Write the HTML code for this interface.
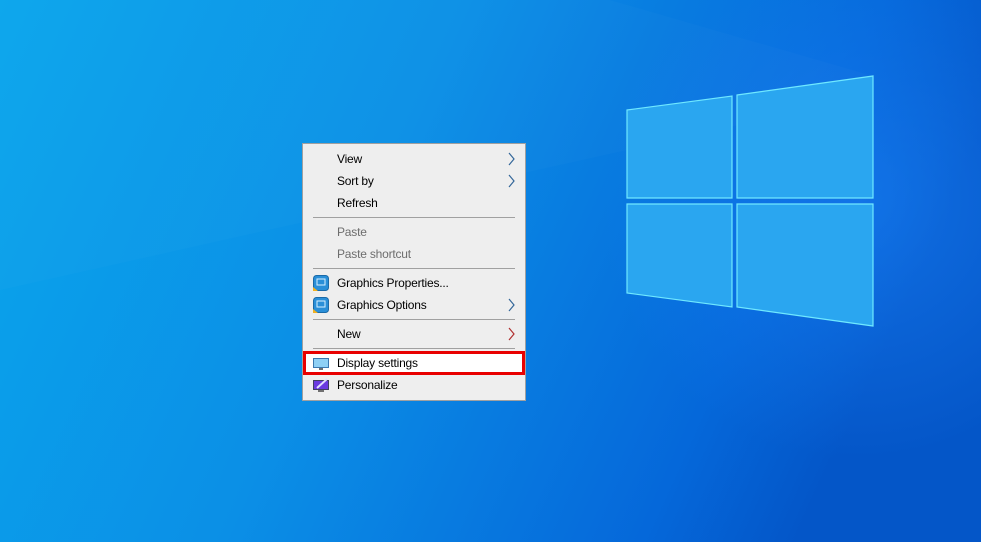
<!DOCTYPE html>
<html><head><meta charset="utf-8"><style>
html,body{margin:0;padding:0;width:981px;height:542px;overflow:hidden}
body{position:relative;font-family:"Liberation Sans",sans-serif}
#bg{position:absolute;left:0;top:0}
.menu{position:absolute;left:302px;top:143px;width:222px;height:256px;background:#eeeeee;border:1px solid #a0a0a0;box-sizing:content-box}
.it{position:absolute;left:34px;font-size:12px;color:#000;line-height:14px;letter-spacing:-0.2px}
.dis{color:#6d6d6d}
.sep{position:absolute;left:10px;width:202px;height:1px;background:#a0a0a0}
.arr{position:absolute;left:204px}
.ic{position:absolute;left:10px}
</style></head><body>
<svg id="bg" width="981" height="542" viewBox="0 0 981 542">
<defs>
<linearGradient id="g" x1="0" y1="0" x2="1" y2="0.25">
<stop offset="0" stop-color="#0aa6ec"/><stop offset="0.45" stop-color="#0b8fe6"/><stop offset="0.85" stop-color="#0568da"/><stop offset="1" stop-color="#0456c8"/>
</linearGradient>
<radialGradient id="r" cx="860" cy="200" r="260" gradientUnits="userSpaceOnUse">
<stop offset="0" stop-color="#1a80f5" stop-opacity="0.6"/><stop offset="1" stop-color="#1a80f5" stop-opacity="0"/>
</radialGradient>
</defs>
<rect width="981" height="542" fill="url(#g)"/>
<rect width="981" height="542" fill="url(#r)"/>
<polygon points="610,0 873,76 873,95 0,290 0,0" fill="#ffffff" opacity="0.02"/>
<g fill="#2aa6f0" stroke="#6fe8ff" stroke-width="1.2">
<polygon points="627,110 732,96 732,198 627,198"/>
<polygon points="737,95 873,76 873,198 737,198"/>
<polygon points="627,204 732,204 732,307 627,293"/>
<polygon points="737,204 873,204 873,326 737,307"/>
</g>
</svg>
<div class="menu">
<div class="it" style="top:8px">View</div>
<svg class="arr" style="top:8px" width="8" height="14"><path d="M2 1 L7 7 L2 13" fill="none" stroke="#336699" stroke-width="1.2"/></svg>
<div class="it" style="top:30px">Sort by</div>
<svg class="arr" style="top:30px" width="8" height="14"><path d="M2 1 L7 7 L2 13" fill="none" stroke="#336699" stroke-width="1.2"/></svg>
<div class="it" style="top:52px">Refresh</div>
<div class="sep" style="top:73px"></div>
<div class="it dis" style="top:81px">Paste</div>
<div class="it dis" style="top:103px">Paste shortcut</div>
<div class="sep" style="top:124px"></div>
<svg class="ic" style="top:131px" width="16" height="16"><rect x="0.5" y="0.5" width="15" height="15" rx="3" fill="#2a8fd8" stroke="#1a6aa8"/><path d="M0 12 L5 16 L0 16Z" fill="#f0b020"/><rect x="4" y="4" width="8" height="6" fill="none" stroke="#d8f0ff"/></svg>
<div class="it" style="top:132px">Graphics Properties...</div>
<svg class="ic" style="top:153px" width="16" height="16"><rect x="0.5" y="0.5" width="15" height="15" rx="3" fill="#2a8fd8" stroke="#1a6aa8"/><path d="M0 12 L5 16 L0 16Z" fill="#f0b020"/><rect x="4" y="4" width="8" height="6" fill="none" stroke="#d8f0ff"/></svg>
<div class="it" style="top:154px">Graphics Options</div>
<svg class="arr" style="top:154px" width="8" height="14"><path d="M2 1 L7 7 L2 13" fill="none" stroke="#336699" stroke-width="1.2"/></svg>
<div class="sep" style="top:175px"></div>
<div class="it" style="top:183px">New</div>
<svg class="arr" style="top:183px" width="8" height="14"><path d="M2 1 L7 7 L2 13" fill="none" stroke="#b03030" stroke-width="1.2"/></svg>
<div class="sep" style="top:204px"></div>
<div style="position:absolute;left:0;top:207px;width:222px;height:24px;box-sizing:border-box;border:3px solid #e80000;background:#fff"></div>
<svg class="ic" style="top:213px" width="16" height="14"><rect x="0.5" y="1.5" width="15" height="9" fill="#8ed0f5" stroke="#3a78b0"/><rect x="6" y="11" width="4" height="2" fill="#707070"/></svg>
<div class="it" style="top:212px">Display settings</div>
<svg class="ic" style="top:234px" width="16" height="14"><rect x="0.5" y="2.5" width="15" height="9" fill="#6a3ae0" stroke="#404060"/><path d="M4 10 L14 1" stroke="#e0e0ff" stroke-width="2"/><rect x="5" y="12" width="6" height="2" fill="#707070"/></svg>
<div class="it" style="top:234px">Personalize</div>
</div>
</body></html>
